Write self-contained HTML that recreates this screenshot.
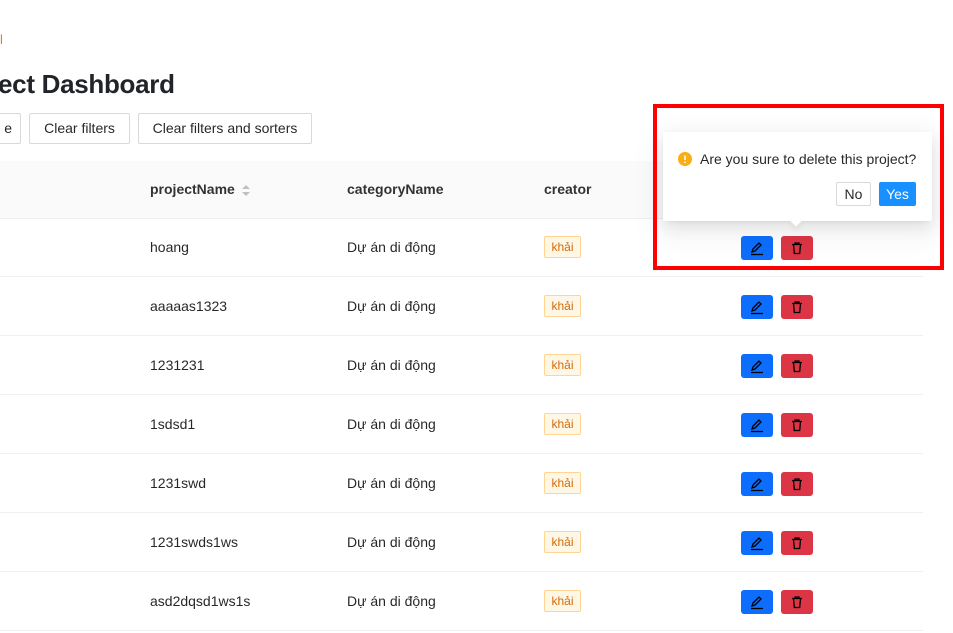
<!DOCTYPE html>
<html><head><meta charset="utf-8"><style>
body{margin:0;width:953px;height:633px;overflow:hidden;background:#fff;font-family:"Liberation Sans","DejaVu Sans",sans-serif;color:rgba(0,0,0,.85);position:relative;font-size:14px}
.a{position:absolute}
.btn{position:absolute;top:113px;height:31px;border:1px solid #d9d9d9;border-radius:2px;background:#fff;box-sizing:border-box;font-size:14px;line-height:29px;text-align:center}
.th{position:absolute;top:161px;left:0;width:923px;height:57px;background:#fafafa;border-bottom:1px solid #f0f0f0}
.row{position:absolute;left:0;width:923px;height:59px;border-bottom:1px solid #f0f0f0;box-sizing:border-box}
.c{position:absolute;top:21px;font-size:14px}
.tag{position:absolute;left:544px;top:18px;height:22px;width:37px;border:1px solid #ffd591;background:#fff7e6;color:#d46b08;font-size:12px;line-height:20px;border-radius:2px;box-sizing:border-box;text-align:center}
.ed{position:absolute;left:741px;top:18px;width:32px;height:24px;background:#0d6efd;border-radius:3px}
.dl{position:absolute;left:781px;top:18px;width:32px;height:24px;background:#dc3545;border-radius:3px}
.th .a{font-weight:bold;color:rgba(0,0,0,.8)}
</style></head><body>
<div class="a" style="left:0;top:32px;color:#d48806;font-size:13px">l</div>
<div class="a" style="left:-2px;top:69px;font-size:26px;font-weight:bold;color:#212529;letter-spacing:-0.3px">ect Dashboard</div>
<div class="btn" style="left:-10px;width:31px;text-align:right;padding-right:8px">e</div>
<div class="btn" style="left:29px;width:101px">Clear filters</div>
<div class="btn" style="left:138px;width:174px">Clear filters and sorters</div>
<div class="th">
<div class="a" style="left:150px;top:20px">projectName</div>
<svg class="a" style="left:241px;top:23px;font-weight:normal" width="10" height="14"><path d="M1 5L5 1L9 5Z M1 8L5 12L9 8Z" fill="#bfbfbf"/></svg>
<div class="a" style="left:347px;top:20px">categoryName</div>
<div class="a" style="left:544px;top:20px">creator</div>
</div>
<div id="rows"></div>
<script>
var n=["hoang","aaaaas1323","1231231","1sdsd1","1231swd","1231swds1ws","asd2dqsd1ws1s"],h="";
var ed='<svg width="32" height="24"><path d="M11 16L12 13L18 7L20 9L14 15Z" fill="none" stroke="#000" stroke-width="1.3"/><path d="M10 18.5H22" stroke="#000" stroke-width="1.3"/></svg>';
var dl='<svg width="32" height="24"><path d="M11 8.5H21M14 8.5V7H18V8.5M12.5 8.5L13.3 17.5H18.7L19.5 8.5" fill="none" stroke="#000" stroke-width="1.3"/></svg>';
for(var i=0;i<7;i++){h+='<div class="row" style="top:'+(218+i*59)+'px"><div class="c" style="left:150px">'+n[i]+'</div><div class="c" style="left:347px">Dự án di động</div><div class="tag">khải</div><div class="ed">'+ed+'</div><div class="dl">'+dl+'</div></div>';}
document.getElementById('rows').innerHTML=h;
</script>
<div class="a" style="left:663px;top:132px;width:269px;height:89px;background:#fff;box-shadow:0 3px 6px -4px rgba(0,0,0,.12),0 6px 16px rgba(0,0,0,.08),0 9px 28px 8px rgba(0,0,0,.05);border-radius:2px"></div>
<div class="a" style="left:792px;top:217px;width:8px;height:8px;background:#fff;transform:rotate(45deg);box-shadow:3px 3px 7px rgba(0,0,0,.07)"></div>
<svg class="a" style="left:678px;top:152px" width="14" height="14"><circle cx="7" cy="7" r="7" fill="#faad14"/><path d="M7 3.5V8" stroke="#fff" stroke-width="1.6"/><circle cx="7" cy="10.3" r="0.9" fill="#fff"/></svg>
<div class="a" style="left:700px;top:151px;font-size:14px">Are you sure to delete this project?</div>
<div class="a" style="left:836px;top:182px;width:35px;height:24px;border:1px solid #d9d9d9;box-sizing:border-box;border-radius:2px;text-align:center;line-height:22px">No</div>
<div class="a" style="left:879px;top:182px;width:37px;height:24px;background:#1890ff;color:#fff;border-radius:2px;text-align:center;line-height:24px">Yes</div>
<div class="a" style="left:653px;top:104px;width:291px;height:166px;border:4px solid #f00;box-sizing:border-box"></div>
</body></html>
